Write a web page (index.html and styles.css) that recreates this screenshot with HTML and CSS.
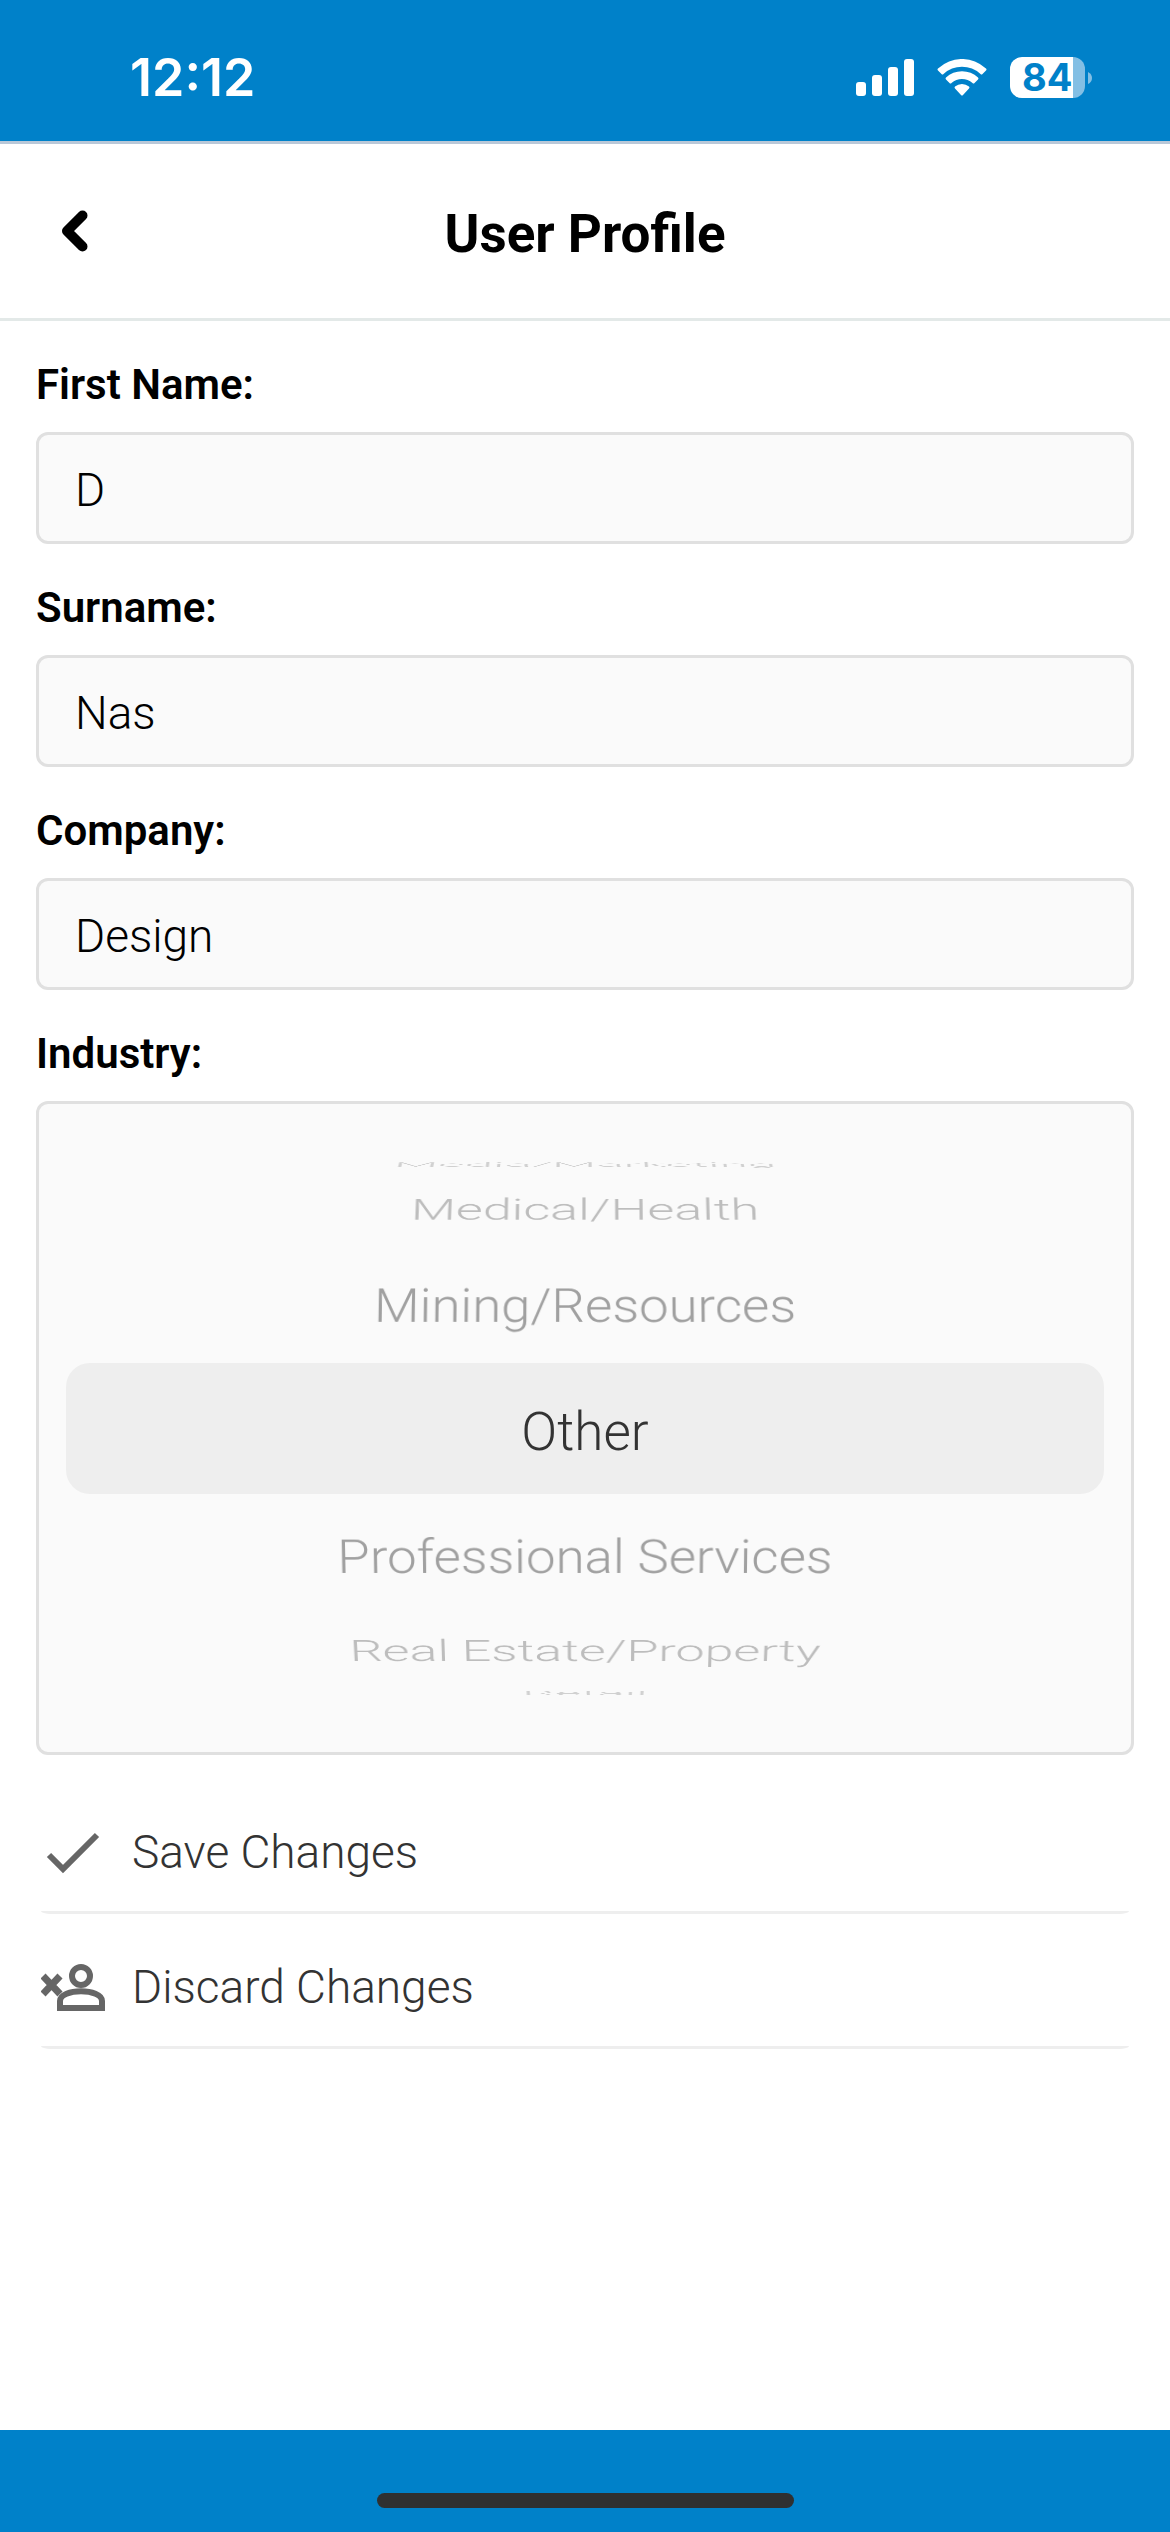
FILE: index.html
```html
<!DOCTYPE html>
<html lang="en">

<head>
    <meta charset="UTF-8" />
    <meta name="viewport" content="width=device-width, initial-scale=1.0" />
    <title>User Profile</title>
    <link rel="stylesheet" href="styles.css">
</head>

<body>
    <div class="status-bar">
        <span class="time">12:12</span>
        <div class="status-icons">
            <svg width="58" height="38" viewBox="0 0 58 38" fill="#fff">
                <rect x="0" y="23" width="10" height="14" rx="3" />
                <rect x="16" y="16" width="10" height="21" rx="3" />
                <rect x="32" y="8" width="10" height="29" rx="3" />
                <rect x="48" y="0" width="10" height="37" rx="3" />
            </svg>
            <svg width="50" height="38" viewBox="0 0 50 38" fill="#fff">
                <path d="M1 9.500Q0 10.500 1 11.500L4.500 15Q5.500 16 6.500 15A27 27 0 0 1 43.500 15Q44.500 16 45.500 15L49 11.500Q50 10.500 49 9.500A35 35 0 0 0 1 9.500Z" />
                <path d="M9 18.500Q8 19.500 9 20.500L12.500 24Q13.500 25 14.500 24A16 16 0 0 1 35.500 24Q36.500 25 37.500 24L41 20.500Q42 19.500 41 18.500A23.500 23.500 0 0 0 9 18.500Z" />
                <path d="M18 27.500Q17 28.500 18 29.500L24 36Q25 37 26 36L32 29.500Q33 28.500 32 27.500A11 11 0 0 0 18 27.500Z" />
            </svg>
            <div class="battery">
                <span class="battery-level">84</span>
                <svg class="battery-cap" width="4" height="12" viewBox="0 0 4 12">
                    <path d="M0 0Q4 2 4 6Q4 10 0 12Z" />
                </svg>
            </div>
        </div>
    </div>

    <header class="header">
        <button class="back" type="button" aria-label="Back">
            <svg width="28" height="42" viewBox="0 0 28 42">
                <path d="M22.500 5.500L7 21L22.500 36.500" />
            </svg>
        </button>
        <h1>User Profile</h1>
    </header>

    <form class="profile">
        <div class="field">
            <label for="first-name">First Name:</label>
            <input type="text" id="first-name" value="D" />
        </div>
        <div class="field">
            <label for="surname">Surname:</label>
            <input type="text" id="surname" value="Nas" />
        </div>
        <div class="field">
            <label for="company">Company:</label>
            <input type="text" id="company" value="Design" />
        </div>
        <div class="field">
            <span class="field-label" id="industry-label">Industry:</span>
            <div class="picker" role="radiogroup" aria-labelledby="industry-label">
                <div class="wheel">
                    <label class="option"><input type="radio" name="industry" />Media/Marketing</label>
                    <label class="option"><input type="radio" name="industry" />Medical/Health</label>
                    <label class="option"><input type="radio" name="industry" />Mining/Resources</label>
                    <label class="option"><input type="radio" name="industry" checked />Other</label>
                    <label class="option"><input type="radio" name="industry" />Professional Services</label>
                    <label class="option"><input type="radio" name="industry" />Real Estate/Property</label>
                    <label class="option"><input type="radio" name="industry" />Retail</label>
                </div>
            </div>
        </div>

        <div class="actions">
            <button class="action" type="submit">
                <svg width="69" height="52" viewBox="5 0 69 52">
                    <path class="line" d="M13 29L27 43L61 9" />
                </svg>
                Save Changes
            </button>
            <button class="action" type="reset">
                <svg width="69" height="52" viewBox="5 0 69 52">
                    <path class="line thick" d="M7 15L24 33M24 15L7 33" />
                    <circle class="line" cx="45" cy="15" r="9" />
                    <path class="line" d="M24 47V40C24 27 66 27 66 40V47Z" />
                </svg>
                Discard Changes
            </button>
        </div>
    </form>

    <footer class="home-bar">
        <div class="home-indicator"></div>
    </footer>
</body>

</html>
```
FILE: styles.css
```css
* {
    box-sizing: border-box;
}

body {
    margin: 0;
    min-height: 100vh;
    display: flex;
    flex-direction: column;
    background-color: #fff;
    color: #000;
    font-family: Roboto, "Liberation Sans", sans-serif;
}

button {
    border: none;
    background: none;
    padding: 0;
    font-family: inherit;
    cursor: pointer;
}

svg {
    display: block;
    flex-shrink: 0;
}

/* status bar */
.status-bar {
    display: flex;
    justify-content: space-between;
    align-items: center;
    height: 144px;
    padding: 14px 78px 0 130px;
    background-color: #0081c9;
    border-bottom: 3px solid #b9c8d8;
    color: #fff;
}

.time {
    font-family: Inter, sans-serif;
    font-size: 52px;
    line-height: 60px;
    font-weight: 600;
}

.status-icons {
    display: flex;
    align-items: center;
    gap: 23px;
}

.battery {
    display: flex;
    align-items: center;
    gap: 3px;
}

.battery-level {
    width: 75px;
    height: 41px;
    border-radius: 12px;
    padding-left: 12px;
    background: linear-gradient(to right, #fff 84%, #83bfe4 84%);
    color: #0081c9;
    font-family: Inter, sans-serif;
    font-size: 38px;
    line-height: 41px;
    font-weight: 700;
}

.battery-cap {
    fill: #83bfe4;
}

/* header */
.header {
    display: grid;
    grid-template-columns: 1fr auto 1fr;
    align-items: center;
    height: 177px;
    padding: 0 60px;
    border-bottom: 3px solid #e3e9e8;
}

.back {
    justify-self: start;
}

.back path {
    fill: none;
    stroke: #000;
    stroke-width: 10;
    stroke-linecap: round;
    stroke-linejoin: round;
}

.header h1 {
    margin: 0;
    padding-top: 6px;
    font-size: 53px;
    line-height: 64px;
    font-weight: 700;
}

/* form */
.profile {
    flex: 1;
    padding: 39px 36px;
}

.field {
    margin-bottom: 39px;
}

.field > label,
.field-label {
    display: block;
    margin-bottom: 22px;
    font-size: 42px;
    line-height: 50px;
    font-weight: 600;
}

.field > input {
    display: block;
    width: 100%;
    height: 112px;
    padding: 4px 36px 0;
    border: 3px solid #e0e0e0;
    border-radius: 12px;
    background-color: #fafafa;
    color: #000;
    font-family: inherit;
    font-size: 46px;
    font-weight: 300;
}

/* industry wheel */
.picker {
    display: flex;
    align-items: center;
    height: 654px;
    padding: 0 27px;
    border: 3px solid #e0e0e0;
    border-radius: 12px;
    background-color: #fafafa;
}

.wheel {
    flex: 1;
    display: grid;
    height: 131px;
    border-radius: 24px;
    background-color: #eee;
}

/* every option sits on the drum, turned 27deg from the next one */
.option {
    grid-area: 1 / 1;
    display: flex;
    align-items: center;
    justify-content: center;
    padding-top: 6px;
    color: #a0a0a0;
    font-size: 53px;
    font-weight: 300;
    white-space: nowrap;
    transform: perspective(6000px) translateZ(-278px) rotateX(var(--turn)) translateZ(278px);
}

.option input {
    position: absolute;
    opacity: 0;
}

.option:nth-child(1) {
    --turn: 81deg;
    color: #d0d0d0;
}

.option:nth-child(2) {
    --turn: 54deg;
    color: #bdbdbd;
}

.option:nth-child(3) {
    --turn: 27deg;
}

.option:nth-child(4) {
    --turn: 0deg;
    color: #333;
}

.option:nth-child(5) {
    --turn: -27deg;
}

.option:nth-child(6) {
    --turn: -54deg;
    color: #bdbdbd;
}

.option:nth-child(7) {
    --turn: -81deg;
    color: #d0d0d0;
}

/* actions */
.actions {
    margin-top: -15px;
    padding: 0 5px;
}

.action {
    display: flex;
    align-items: center;
    gap: 22px;
    width: 100%;
    height: 135px;
    padding-top: 14px;
    border-bottom: 3px solid #eee;
    border-radius: 10px / 3px;
    color: #333;
    font-size: 46px;
    font-weight: 300;
}

.action .line {
    fill: none;
    stroke: #666;
    stroke-width: 6;
}

.action .thick {
    stroke-width: 7;
}

/* bottom bar */
.home-bar {
    display: flex;
    justify-content: center;
    height: 102px;
    padding-top: 63px;
    background-color: #0081c9;
}

.home-indicator {
    width: 417px;
    height: 15px;
    border-radius: 8px;
    background-color: #2f3031;
}
```
